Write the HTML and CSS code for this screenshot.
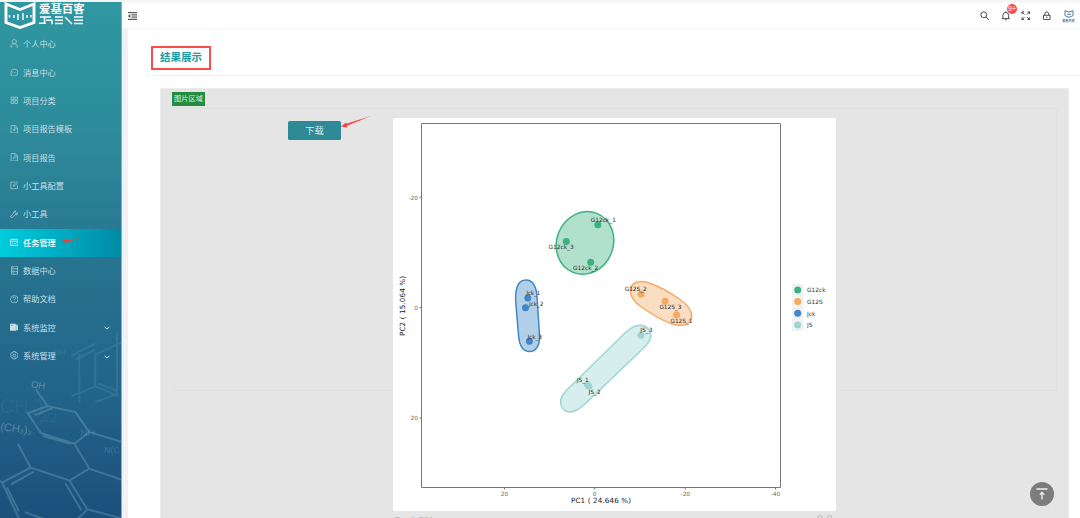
FILE: index.html
```
<!DOCTYPE html>
<html lang="zh-CN">
<head>
<meta charset="utf-8">
<title>任务管理</title>
<link rel="stylesheet" href="styles.css">
</head>
<body>
<div class="app">
  <aside class="sidebar">
    <svg class="molecules" viewBox="0 325 122 193" fill="none" stroke="#8fc0d0" stroke-width="2">
      <g opacity=".3">
        <path d="M36 389l12 17-20 7 13 20 34 11 15-12-14-20-28-6M35 415l18-7M43 436l28 8M75 444l15 25-20 12-39-13-13-24M90 432l32 10M90 469l32 11M70 481l18 29-10 10M66 484l16 27M31 468l-29 15 17 36M34 472l-23 13M2 483l-4-3M7 488l12 24M25 513l20 7M88 510l34 9"/>
      </g>
      <g opacity=".15">
        <path d="M122 342l-26 12 0 10M96 364v22l-24 10M96 386l24 10M99 383l20 8M72 355l24-12M76 359l20-10M118 332v62l-22 8M80 353v50"/>
      </g>
      <g class="formula" stroke="none" fill="#a9d1dd">
        <text x="31" y="387" font-size="9.500" opacity=".4" transform="rotate(8 31 387)">OH</text>
        <text x="0" y="430" font-size="11" opacity=".38" transform="rotate(8 0 430)">(CH₃)₂</text>
        <text x="0" y="413" font-size="20" opacity=".06">CH₃)</text>
        <text x="81" y="436" font-size="10" opacity=".17">NH</text>
        <text x="105" y="453" font-size="9" opacity=".2">N(C</text>
        <text x="54" y="354" font-size="8" opacity=".12">OH</text>
        <text x="39" y="422" font-size="13" opacity=".08">3/2</text>
      </g>
    </svg>
    <div class="brand">
      <svg class="brand-mark" viewBox="0 0 32 27" fill="none" stroke="#fff" stroke-width="2.900">
        <path d="M2 2v18.500l14 5 14-5V2L16 7.500 2 2V20"/>
        <path d="M5.500 13v2.500M10 13v3M14 12v6M19 11v7M23 13v3M27 13v2.500" stroke-width="1.400"/>
      </svg>
      <div class="brand-words">
        <div class="brand-name">爱基百客</div>
        <svg class="brand-gene" viewBox="0 0 46 9" fill="none" stroke="#fff" stroke-width="1.500">
          <path d="M1 1h11M5.500 1v6M0 7.300h7M7 4.300h6v4M16 1h8M16 4.300h8M16 7.500h8M26 1l7 7M35 1h9M35 4.300h9M35 7.500h9"/>
        </svg>
      </div>
    </div>
    <nav class="menu">
      <a class="item"><svg class="icon" viewBox="0 0 16 16"><circle cx="8" cy="5" r="4"/><path d="M2 15c0-4 2-6 6-6s6 2 6 6M1 15h3M12 15h3"/></svg><span>个人中心</span></a>
      <a class="item"><svg class="icon" viewBox="0 0 16 16"><path d="M2 15V8a6.500 6.500 0 1 1 6.500 7zM4.500 8.500h1.500M7.500 8.500h1.500M10.500 8.500h1.500"/></svg><span>消息中心</span></a>
      <a class="item"><svg class="icon" viewBox="0 0 16 16"><path d="M2 2h5v5H2zM9 2h5v5H9zM2 9h5v5H2zM9 9h5v5H9z"/></svg><span>项目分类</span></a>
      <a class="item"><svg class="icon" viewBox="0 0 16 16"><path d="M2 1h8l4 4v10H2zM9 1v5h5M5.500 9h5M8 6.500v5"/></svg><span>项目报告模板</span></a>
      <a class="item"><svg class="icon" viewBox="0 0 16 16"><path d="M2 1h8l4 4v10H2zM9 1v5h5M5.500 12l2-4 3.500 2"/></svg><span>项目报告</span></a>
      <a class="item"><svg class="icon" viewBox="0 0 16 16"><path d="M9 2H1.500v12.500H14V8M6 10l1-3 6-6 2 2-6 6z"/></svg><span>小工具配置</span></a>
      <a class="item"><svg class="icon" viewBox="0 0 16 16"><path d="M2 14l-1-2 6-6c-1-3 2-5 4-4L9 5l2 2 4-2c0 4-3 5-5 4l-6 5z"/></svg><span>小工具</span></a>
      <a class="item active"><svg class="icon" viewBox="0 0 16 16"><path d="M1 3h14v11H1zM1 6h14M5 1v3M11 1v3M4 9h2M4 11h2M8 10l1.500 1.500L13 8"/></svg><span>任务管理</span><svg class="pointer" viewBox="0 0 20 6"><path d="M0 3.300L7 .6 6 2.300 20 0 7 3.700 7 5.300z"/></svg></a>
      <a class="item"><svg class="icon" viewBox="0 0 16 16"><path d="M3 .5h11v15H3zM3 5.300h11M3 10.600h11M5 3h2M5 8h2M5 13h2"/></svg><span>数据中心</span></a>
      <a class="item"><svg class="icon" viewBox="0 0 16 16"><circle cx="8" cy="8" r="7"/><path d="M5.500 6.500c0-3.500 5-3.500 5-.5 0 2-2.500 1.500-2.500 4M8 11v1.500"/></svg><span>帮助文档</span></a>
      <a class="item"><svg class="icon solid" viewBox="0 0 16 16"><path d="M0 2h11v12H0zM12 4h3v9h-3z"/><path d="M2.500 4.500h2" stroke="#28728d"/></svg><span>系统监控</span><svg class="chevron" viewBox="0 0 6 4"><path d="M.6.800L3 3 5.400.8"/></svg></a>
      <a class="item"><svg class="icon" viewBox="0 0 16 16"><path d="M6 1h4l.5 2.500 2.500-.5 2 3.500L13.500 8 15 9.500 13 13l-2.500-.5L10 15H6l-.5-2.500L3 13 1 9.500 2.500 8 1 6.500 3 3l2.500.5z"/><circle cx="8" cy="8" r="2.500"/></svg><span>系统管理</span><svg class="chevron" viewBox="0 0 6 4"><path d="M.6.800L3 3 5.400.8"/></svg></a>
    </nav>
  </aside>

  <div class="main">
    <header class="topbar">
      <svg class="fold" viewBox="0 0 9 8" stroke="#333" fill="none" stroke-width="1"><path d="M0 .7h9M3.500 2.900H9M3.500 5.100H9M0 7.300h9"/><path d="M2.300 2.200v3.600L0 4z" fill="#333" stroke="none"/></svg>
      <div class="tools">
        <svg class="tool" viewBox="0 0 10 10"><circle cx="4" cy="4" r="3.100"/><path d="M6.300 6.300l3 3"/></svg>
        <div class="bell">
          <svg class="tool" viewBox="0 0 10 10"><path d="M.8 8h8.400M2 8V4.500a3 3 0 0 1 6 0V8M5 .3v1.200M4 9.300h2"/></svg>
          <span class="badge">9+</span>
        </div>
        <svg class="tool" viewBox="0 0 10 10"><path d="M1 3.200V1h2.200M1 1l2.700 2.700M6.800 1H9v2.200M9 1L6.300 3.700M1 6.800V9h2.200M1 9l2.700-2.700M6.800 9H9V6.800M9 9L6.300 6.300"/></svg>
        <svg class="tool" viewBox="0 0 10 10"><path d="M1.500 4.500h7V9h-7zM3 4.500V3a2 2 0 0 1 4 0v1.500M5 6v1.500"/></svg>
        <div class="avatar">
          <svg viewBox="0 0 10 8" fill="none" stroke="#527b9b"><path d="M1 .7v5L5 7.300l4-1.600v-5L5 2 1 .7M3 4.200h4"/></svg>
          <span>爱基百客</span>
        </div>
      </div>
    </header>

    <main class="page">
      <div class="page-head"><h1 class="title">结果展示</h1></div>
      <section class="panel">
        <span class="tag">图片区域</span>
        <div class="result">
          <div class="actions">
            <button class="download">下载</button>
            <svg class="arrow" viewBox="0 0 30 12"><path d="M0 10.600L5 6.500 5.300 7.800 30 0 6 9.800 6 11.400z"/></svg>
          </div>
          <figure class="figure">
            <div class="card">
              <svg class="plot" viewBox="393 118 443 393">
                <path class="frame" d="M421.500 123.500h359v364h-359z"/>
                <path class="ticks" d="M419.500 197.300h2M419.500 307.500h2M419.500 418h2M504.500 487.500v2M594.700 487.500v2M685.300 487.500v2M775.500 487.500v2"/>
                <g class="tick-text">
                  <text x="418" y="199.500" text-anchor="end">-20</text>
                  <text x="418" y="309.700" text-anchor="end">0</text>
                  <text x="418" y="420.200" text-anchor="end">20</text>
                  <text x="504.500" y="495.500" text-anchor="middle">20</text>
                  <text x="594.700" y="495.500" text-anchor="middle">0</text>
                  <text x="685.300" y="495.500" text-anchor="middle">-20</text>
                  <text x="775.500" y="495.500" text-anchor="middle">-40</text>
                </g>
                <g class="axis-text">
                  <text x="571" y="503.200" textLength="60">PC1 ( 24.646 %)</text>
                  <text transform="translate(405.200 336) rotate(-90)" textLength="60">PC2 ( 15.064 %)</text>
                </g>
                <g class="hulls">
                  <ellipse class="green" cx="585" cy="242.900" rx="28.300" ry="31.800" transform="rotate(22 585 242.900)"/>
                  <path class="blue" d="M526 279.900C533 279.900 536.700 287 537.200 299L539.500 335C540.200 345 536 351.600 529.500 351.600S519.500 346 518.600 336L515.700 302C515 288 518 279.900 526 279.900Z"/>
                  <path class="orange" d="M630.300 291C630.300 284 637 279.500 647 282.300 658 286 671 293 680 299.500 688 305 691.700 310 691.700 316 691.700 323 684 327 674 324.500 664 322 650 313 640 306 633 300.500 630.300 296 630.300 291Z"/>
                  <path class="teal" d="M625.500 332.500C632 326.500 638 324.500 642.500 325.500 649 327 652 334 650.200 339 649 343 645 346.500 642 349.500L585 404C578 410.500 572 413.500 566.500 411.300 560.500 408.500 559 401.500 562.500 395.500 564.500 392 569 387.500 573 384Z"/>
                </g>
                <g fill="#3eb182"><circle cx="597.800" cy="224.700" r="3.500"/><circle cx="566.300" cy="241.500" r="3.500"/><circle cx="590.700" cy="262.200" r="3.500"/></g>
                <g fill="#3f87c6"><circle cx="527.800" cy="298" r="3.500"/><circle cx="525.500" cy="307.700" r="3.500"/><circle cx="529.400" cy="341.300" r="3.500"/></g>
                <g fill="#f5a963"><circle cx="641" cy="293.900" r="3.500"/><circle cx="665" cy="301.200" r="3.500"/><circle cx="676.600" cy="314.800" r="3.500"/></g>
                <g fill="#9bd6d5"><circle cx="641" cy="335.200" r="3.500"/><circle cx="587.500" cy="384.500" r="3.500"/><circle cx="588.800" cy="386.200" r="3.500"/></g>
                <g class="point-text">
                  <text x="590.700" y="221.700">G12ck_1</text><text x="548.500" y="249.300">G12ck_3</text><text x="573" y="269.700">G12ck_2</text>
                  <text x="526.300" y="295" textLength="14">Jck_1</text><text x="529" y="305.700" textLength="14.500">Jck_2</text><text x="527.500" y="338.700" textLength="14.500">Jck_3</text>
                  <text x="624.700" y="291" textLength="22">G12S_2</text><text x="659.400" y="309" textLength="22">G12S_3</text><text x="670.500" y="322.500" textLength="22">G12S_1</text>
                  <text x="640.300" y="332">JS_3</text><text x="576.700" y="382">JS_1</text><text x="588.600" y="394">JS_2</text>
                </g>
                <path fill="#f2f2f2" d="M792 284h11.500v47H792z"/>
                <circle cx="797.700" cy="290" r="3.500" fill="#3eb182"/><circle cx="797.700" cy="301.600" r="3.500" fill="#f5a963"/><circle cx="797.700" cy="313.300" r="3.500" fill="#3f87c6"/><circle cx="797.700" cy="325" r="3.500" fill="#9bd6d5"/>
                <g class="point-text legend"><text x="807" y="292.300">G12ck</text><text x="807" y="304">G12S</text><text x="807" y="315.700">Jck</text><text x="807" y="327.300">JS</text></g>
              </svg>
            </div>
            <figcaption class="caption">
              <span>Result: PCA</span>
              <svg viewBox="0 0 16 8" fill="none" stroke="#aaa" stroke-width=".8"><circle cx="3" cy="3" r="2.400"/><circle cx="12.500" cy="3" r="2.400"/></svg>
            </figcaption>
          </figure>
        </div>
      </section>
    </main>
  </div>
  <button class="to-top"><svg viewBox="0 0 12 12" fill="none" stroke="#eee" stroke-width="1.300"><path d="M.5 1h11M6 11.500V5M3.700 6.700L6 4.400l2.300 2.300"/></svg></button>
</div>
</body>
</html>
```

FILE: styles.css
```
* { box-sizing: border-box; }
body {
  margin: 0;
  height: 518px;
  overflow: hidden;
  background: #fff;
  font-family: "Noto Sans CJK SC", sans-serif;
}
svg { display: block; flex: none; }
.app {
  position: relative;
  display: flex;
  height: 518px;
  padding-top: 2px;
  overflow: hidden;
  background: #f5f5f5;
}

/* Sidebar */
.sidebar {
  position: relative;
  flex: none;
  width: 122px;
  border-right: 1px solid #83aebd;
  background: linear-gradient(#2f98a1 0%, #2d8b9a 25%, #27748f 50%, #22648a 75%, #1b507b 100%);
}
.molecules {
  position: absolute;
  left: 0;
  bottom: 0;
  width: 121px;
  height: 193px;
}
.formula { font-family: "Liberation Sans", sans-serif; }
.brand {
  position: relative;
  display: flex;
  gap: 3px;
  height: 27px;
  margin-bottom: 1px;
  padding-left: 4px;
}
.brand-mark { width: 32px; height: 27px; }
.brand-name {
  height: 12px;
  color: #fff;
  font-size: 11.400px;
  font-weight: 700;
  line-height: 12px;
  white-space: nowrap;
}
.brand-gene { width: 46px; height: 9px; margin-top: 2px; }
.menu { position: relative; }
.item {
  display: flex;
  align-items: center;
  height: 28.360px;
  padding: 0 11px 1px 9.500px;
  color: #c7dfe5;
  font-size: 8.200px;
  line-height: 12px;
}
.item span { margin-left: 5px; padding-bottom: 1px; white-space: nowrap; }
.icon {
  width: 8.500px;
  height: 8.500px;
  fill: none;
  stroke: #b5d4dc;
  stroke-width: 1.300;
}
.icon.solid { fill: #c7dfe5; }
.active {
  background: linear-gradient(90deg, #00ccdf, #00b3c8 40%, #0089a4);
  color: #fff;
  font-weight: 500;
}
.active .icon { stroke: #dff8fa; }
.pointer { width: 20px; height: 6px; margin: -2px 0 0 5px; fill: #f0413f; }
.chevron {
  width: 6px;
  height: 4px;
  margin: 2px 0 0 auto;
  fill: none;
  stroke: #c7dfe5;
}

/* Header */
.main {
  display: flex;
  flex: 1;
  flex-direction: column;
  min-width: 0;
  background: #f0f2f5;
}
.topbar {
  display: flex;
  flex: none;
  align-items: center;
  justify-content: space-between;
  height: 27px;
  padding: 1px 5px 0 6px;
  border-top: 1px solid #fafafa;
  border-bottom: 1px solid #f5f5f5;
  background: #fff;
}
.fold { width: 9px; height: 8px; }
.tools { display: flex; align-items: center; gap: 10.800px; }
.tool { width: 9.500px; height: 9.500px; fill: none; stroke: #444; stroke-width: 1; }
.bell { position: relative; margin-left: 1px; }
.badge {
  position: absolute;
  left: 6px;
  top: -7px;
  width: 10px;
  height: 10px;
  border-radius: 5px;
  background: #fb4d50;
  color: #fff;
  font: 7px/10px "Liberation Sans", sans-serif;
  text-align: center;
}
.avatar { display: flex; flex-direction: column; align-items: center; width: 13px; }
.avatar svg { width: 10px; height: 8px; }
.avatar span { height: 5px; color: #527b9b; font-size: 3.200px; font-weight: 700; line-height: 5px; }

/* Page */
.page {
  flex: 1;
  min-height: 0;
  margin-left: 6px;
  padding: 16px 11px 0 24px;
  background: #fff;
}
.page-head { height: 30px; margin: 0 -11px 0 -6px; padding-left: 6px; border-bottom: 1px solid #f2f2f2; }
.title {
  width: 60px;
  height: 24px;
  margin: 1px 0 0 -1px;
  border: 2px solid #f94d4d;
  color: #159ba3;
  font-size: 10.500px;
  font-weight: 700;
  line-height: 18px;
  text-align: center;
  white-space: nowrap;
}
.panel {
  height: 440px;
  margin: 12px 0 0 8px;
  padding: 3px 11px 0;
  border: 1px solid #ebebeb;
  background: #e5e5e5;
}
.tag {
  display: block;
  width: 33px;
  height: 14px;
  background: #248d40;
  color: #d9eddd;
  font-size: 7.200px;
  line-height: 13px;
  text-align: center;
}
.result {
  display: flex;
  height: 283px;
  margin-top: 2px;
  padding: 9px 0 0 115px;
  border: 1px solid #e1e1e1;
}
.actions { display: flex; width: 105px; padding-top: 3px; }
.download {
  flex: none;
  width: 53px;
  height: 18.500px;
  padding: 0;
  border: 0;
  border-radius: 1.500px;
  background: #2d8a96;
  color: #dcecef;
  font: 9.400px/18px "Noto Sans CJK SC", sans-serif;
}
.arrow { width: 30px; height: 12px; margin-top: -5px; fill: #f6413d; }
.figure { flex: none; width: 443px; margin: 0; }
.card { height: 393px; border-radius: 2px; background: #fff; }
.plot { width: 443px; height: 393px; font-family: "DejaVu Sans", sans-serif; }
.frame { fill: none; stroke: #777; }
.ticks { stroke: #555; stroke-width: .8; }
.tick-text { fill: #666; font-size: 5.800px; }
.axis-text { fill: #222; font-size: 7.200px; }
.point-text { fill: #303030; font-size: 5.850px; }
.hulls { stroke-width: 1.500; }
.green { fill: #b1e0cd; stroke: #3eb182; }
.blue { fill: #b2cfe8; stroke: #3f87c6; }
.orange { fill: #fbddc1; stroke: #f5a963; }
.teal { fill: #d7eeee; stroke: #9bd6d5; }
.caption {
  display: flex;
  justify-content: space-between;
  padding: 4px 3px 0 2px;
  color: #aaa;
  font: 7px/10px "Liberation Sans", sans-serif;
}
.caption svg { width: 16px; height: 8px; }
.to-top {
  position: absolute;
  left: 1030px;
  top: 482px;
  display: flex;
  align-items: center;
  justify-content: center;
  width: 24px;
  height: 24px;
  padding: 0;
  border: 0;
  border-radius: 50%;
  background: #7c7c7c;
}
.to-top svg { width: 12px; height: 12px; }
```
